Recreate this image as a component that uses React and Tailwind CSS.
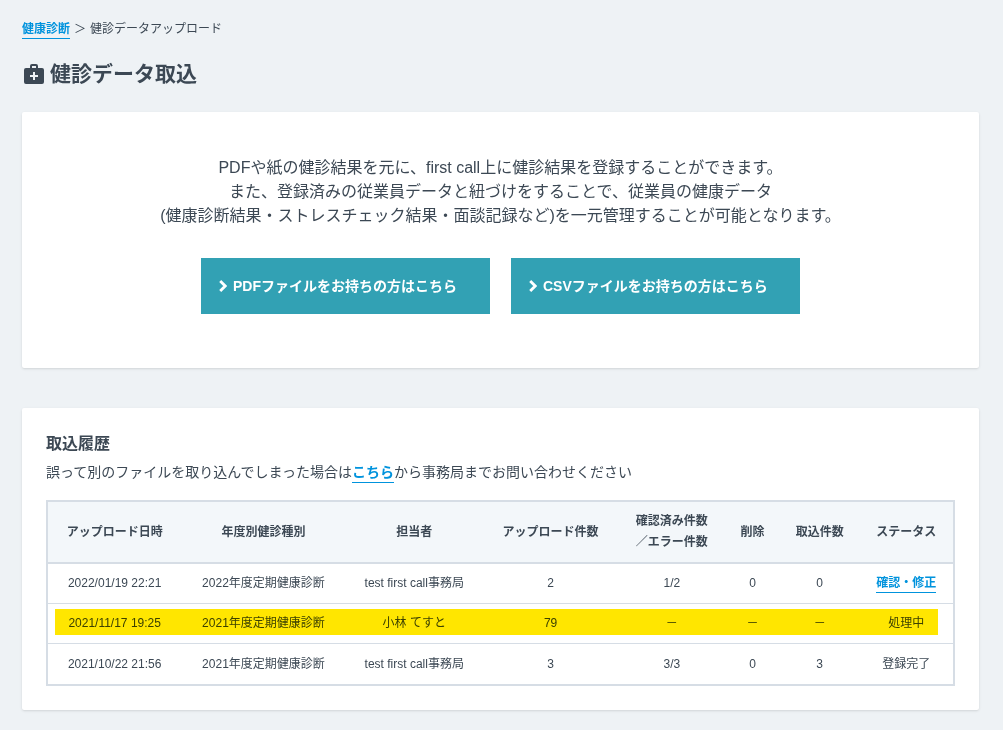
import clsx from "clsx";

const history = [
  {
    date: "2022/01/19 22:21",
    type: "2022年度定期健康診断",
    owner: "test first call事務局",
    uploaded: "2",
    checked: "1/2",
    deleted: "0",
    imported: "0",
    status: "確認・修正",
    href: "#confirm",
  },
  {
    date: "2021/11/17 19:25",
    type: "2021年度定期健康診断",
    owner: "小林 てすと",
    uploaded: "79",
    checked: "－",
    deleted: "－",
    imported: "－",
    status: "処理中",
    highlighted: true,
  },
  {
    date: "2021/10/22 21:56",
    type: "2021年度定期健康診断",
    owner: "test first call事務局",
    uploaded: "3",
    checked: "3/3",
    deleted: "0",
    imported: "3",
    status: "登録完了",
  },
];

function TextLink({ href, className, children }) {
  return (
    <a
      href={href}
      className={clsx("inline-block border-b border-[#0093dd] font-bold text-[#0093dd]", className)}
    >
      {children}
    </a>
  );
}

function MedicalBagIcon() {
  return (
    <svg viewBox="0 0 20 20" className="h-5 w-5" aria-hidden="true">
      <path
        fill="currentColor"
        fillRule="evenodd"
        d="M8 0h4a2 2 0 0 1 2 2v2h4a2 2 0 0 1 2 2v12a2 2 0 0 1-2 2H2a2 2 0 0 1-2-2V6a2 2 0 0 1 2-2h4V2a2 2 0 0 1 2-2zm0 2v2h4V2zm1 6v3H6v2h3v3h2v-3h3v-2h-3V8z"
      />
    </svg>
  );
}

function UploadButton({ children }) {
  return (
    <button
      type="button"
      className="flex h-14 w-[289px] cursor-pointer items-center gap-1.5 bg-[#32a1b4] px-[18px] text-sm font-bold text-white hover:bg-[#2b92a4]"
    >
      <svg viewBox="0 0 8 12" className="h-3 w-2" aria-hidden="true">
        <path d="M1.2 1l5 5-5 5" fill="none" stroke="currentColor" strokeWidth="2.8" />
      </svg>
      <span>{children}</span>
    </button>
  );
}

export default function App() {
  return (
    <div className="min-h-screen bg-[#eef2f5] pt-5 pr-6 pb-5 pl-[22px] font-['Liberation_Sans','Noto_Sans_CJK_JP',sans-serif] text-[#3c4854]">
      <nav className="flex items-start gap-1 text-xs leading-[18px]" aria-label="パンくず">
        <TextLink href="#checkup">健康診断</TextLink>
        <span>＞</span>
        <span>健診データアップロード</span>
      </nav>

      <h1 className="mt-[19px] flex items-center gap-1.5 pl-0.5 text-[21px] leading-8 font-bold">
        <MedicalBagIcon />
        健診データ取込
      </h1>

      <main className="mt-[22px] space-y-10">
        <section className="rounded-xs bg-white px-6 pt-11 pb-[54px] shadow-sm">
          <p className="text-center text-base leading-6">
            PDFや紙の健診結果を元に、first call上に健診結果を登録することができます。
            <br />
            また、登録済みの従業員データと紐づけをすることで、従業員の健康データ
            <br />
            (健康診断結果・ストレスチェック結果・面談記録など)を一元管理することが可能となります。
          </p>
          <div className="mt-[30px] flex flex-wrap justify-center gap-[21px]">
            <UploadButton>PDFファイルをお持ちの方はこちら</UploadButton>
            <UploadButton>CSVファイルをお持ちの方はこちら</UploadButton>
          </div>
        </section>

        <section className="rounded-xs bg-white p-6 shadow-sm">
          <h2 className="text-base leading-6 font-bold">取込履歴</h2>
          <p className="mt-1 text-sm leading-6">
            誤って別のファイルを取り込んでしまった場合は
            <TextLink href="#contact" className="leading-5">
              こちら
            </TextLink>
            から事務局までお問い合わせください
          </p>

          <table className="mt-4 w-full table-fixed border-2 border-[#d6dde5] text-center text-xs">
            <colgroup>
              <col className="w-[134px]" />
              <col className="w-[164px]" />
              <col className="w-[137px]" />
              <col className="w-[135px]" />
              <col className="w-[107px]" />
              <col className="w-[54px]" />
              <col className="w-[80px]" />
              <col className="w-[94px]" />
            </colgroup>
            <thead>
              <tr className="h-[62px] border-b-2 border-[#d6dde5] bg-[#f3f7fa] leading-[21px]">
                <th>アップロード日時</th>
                <th>年度別健診種別</th>
                <th>担当者</th>
                <th>アップロード件数</th>
                <th>
                  確認済み件数
                  <br />
                  ／エラー件数
                </th>
                <th>削除</th>
                <th>取込件数</th>
                <th>ステータス</th>
              </tr>
            </thead>
            <tbody>
              {history.map((row) => (
                <tr
                  key={row.date}
                  className={clsx(
                    "h-10 border-b border-[#d6dde5] leading-[18px] last:h-[42px]",
                    row.highlighted && "relative"
                  )}
                >
                  <td>
                    {row.date}
                    {row.highlighted && (
                      <div className="pointer-events-none absolute top-1.5 right-4 bottom-[7px] left-2 bg-[#ffe600] mix-blend-multiply" />
                    )}
                  </td>
                  <td>{row.type}</td>
                  <td>{row.owner}</td>
                  <td>{row.uploaded}</td>
                  <td>{row.checked}</td>
                  <td>{row.deleted}</td>
                  <td>{row.imported}</td>
                  <td>{row.href ? <TextLink href={row.href}>{row.status}</TextLink> : row.status}</td>
                </tr>
              ))}
            </tbody>
          </table>
        </section>
      </main>
    </div>
  );
}
